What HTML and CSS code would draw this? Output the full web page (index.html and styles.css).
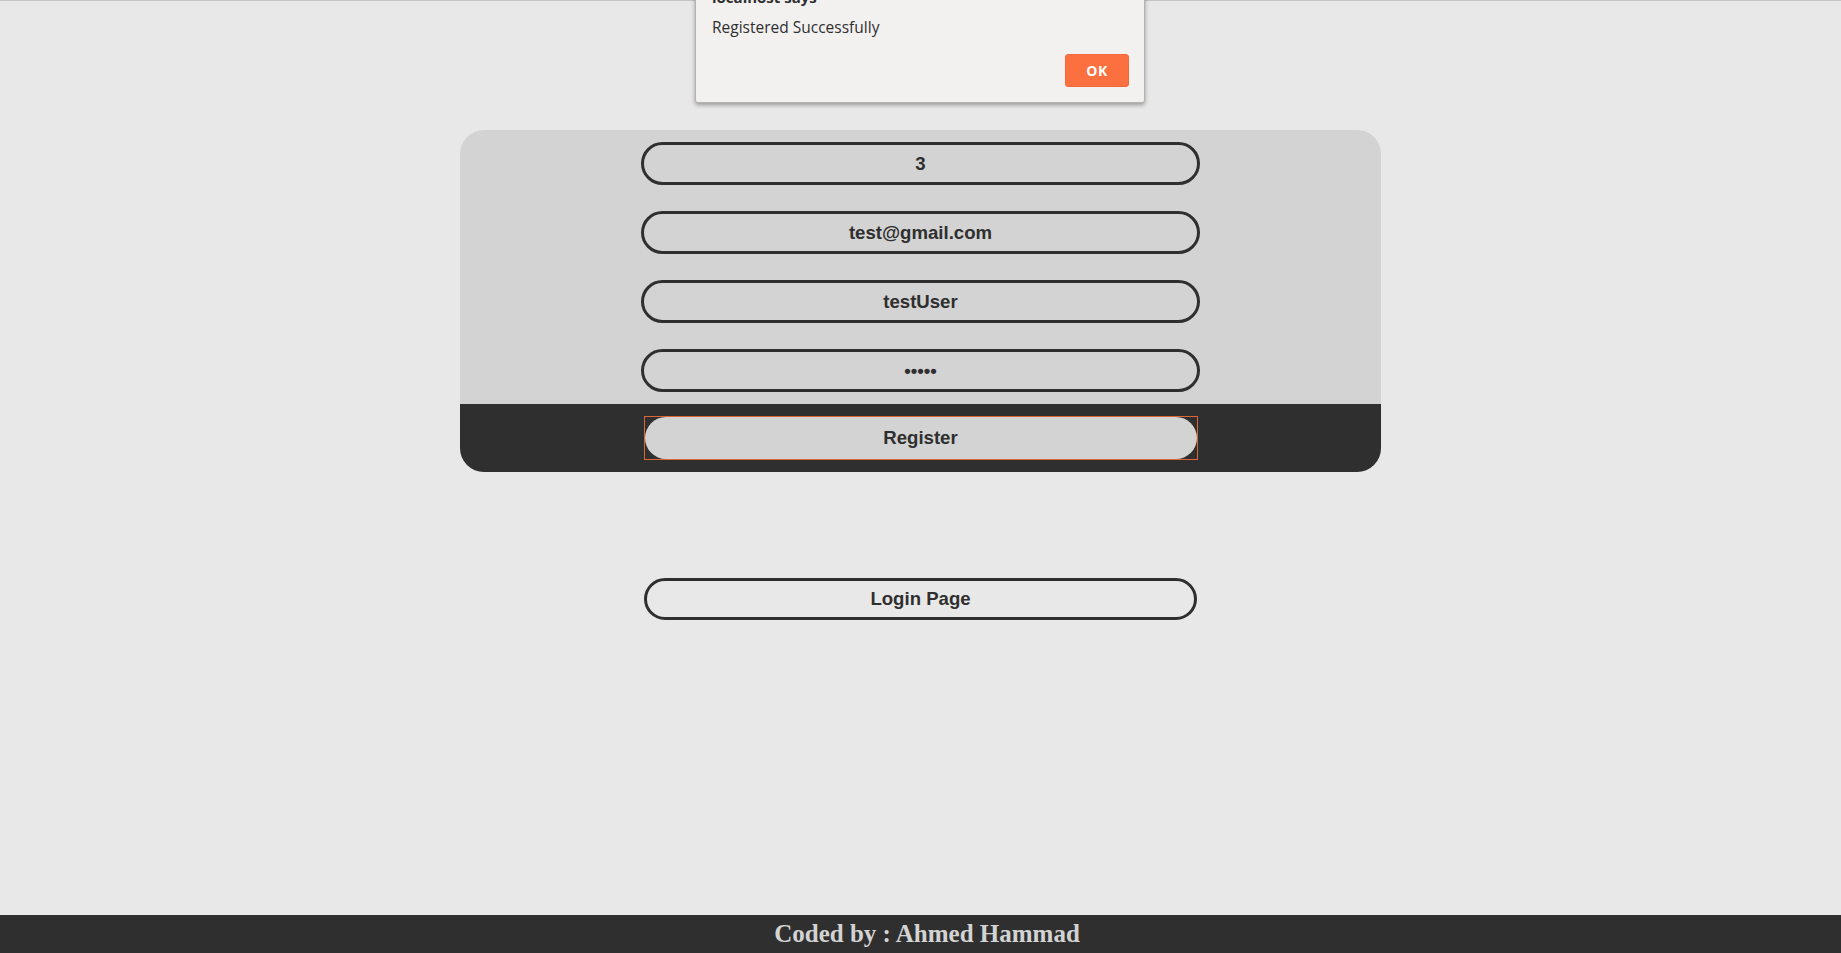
FILE: index.html
```html
<!DOCTYPE html>
<html>
<head>
<meta charset="utf-8">
<title>Register</title>
<link rel="stylesheet" href="styles.css">
</head>
<body>
<div class="page">
  <main class="main">
    <form class="card">
      <div class="fields">
        <input class="field" type="text" value="3">
        <input class="field" type="text" value="test@gmail.com">
        <input class="field" type="text" value="testUser">
        <input class="field" type="password" value="12345">
      </div>
      <div class="actions">
        <div class="focus-ring"><button type="button" class="btn-register">Register</button></div>
      </div>
    </form>
    <button type="button" class="btn-login">Login Page</button>
  </main>
  <footer class="footer">Coded by : Ahmed Hammad</footer>
</div>
<div class="dialog">
  <div class="dialog-title">localhost says</div>
  <div class="dialog-msg">Registered Successfully</div>
  <div class="dialog-actions"><button type="button" class="dialog-ok">OK</button></div>
</div>
</body>
</html>
```
FILE: styles.css
```css
* { box-sizing: border-box; }
html, body { margin: 0; padding: 0; height: 100%; }
body {
  background: #e8e8e8;
  border-top: 1px solid #c4c4c4;
  font-family: "Liberation Sans", Arial, sans-serif;
  overflow: hidden;
}
.page {
  height: 952px;
  display: flex;
  flex-direction: column;
}
.main {
  flex: 1;
  display: flex;
  flex-direction: column;
  align-items: center;
  padding-top: 129px;
}
.card {
  width: 921px;
  border-radius: 24px;
  overflow: hidden;
  background: #d3d3d3;
  display: flex;
  flex-direction: column;
}
.fields {
  display: flex;
  flex-direction: column;
  align-items: center;
  gap: 26px;
  padding: 12px 0 12px;
}
.field {
  width: 559px;
  height: 43px;
  border: 3px solid #2f2f2f;
  border-radius: 25px;
  background: #d3d3d3;
  text-align: center;
  font-family: "Liberation Sans", Arial, sans-serif;
  font-weight: bold;
  font-size: 18.6px;
  color: #2f2f2f;
  outline: none;
  padding: 0 10px;
}
.actions {
  background: #2f2f2f;
  display: flex;
  justify-content: center;
  padding: 12px 0;
}
.focus-ring {
  width: 554px;
  height: 44px;
  border: 1px solid #e0643a;
  display: flex;
}
.btn-register {
  flex: 1;
  border: none;
  border-radius: 22px;
  background: #d3d3d3;
  font-family: "Liberation Sans", Arial, sans-serif;
  font-weight: bold;
  font-size: 18.6px;
  color: #2f2f2f;
  padding: 0;
}
.btn-login {
  margin-top: 106px;
  width: 553px;
  height: 42px;
  border: 3px solid #2f2f2f;
  border-radius: 25px;
  background: transparent;
  font-family: "Liberation Sans", Arial, sans-serif;
  font-weight: bold;
  font-size: 18.6px;
  color: #2f2f2f;
}
.footer {
  height: 38px;
  background: #2f2f2f;
  color: #d3d3d3;
  font-family: "Liberation Serif", "Times New Roman", serif;
  font-weight: bold;
  font-size: 25px;
  display: flex;
  align-items: center;
  justify-content: center;
  padding-left: 13px;
}
.dialog {
  position: absolute;
  left: 695px;
  top: -26px;
  width: 450px;
  background: #f2f1f0;
  border: 1px solid #b5b3b1;
  border-radius: 0 0 3px 3px;
  box-shadow: 0 2px 4px rgba(0,0,0,0.35);
  font-family: "Open Sans", "Noto Sans", sans-serif;
  color: #2f2f2f;
  padding: 12px 15px 15px 16px;
}
.dialog-title {
  font-weight: bold;
  font-size: 15px;
  line-height: 20px;
}
.dialog-msg {
  font-size: 15.5px;
  line-height: 20px;
  margin-top: 10px;
}
.dialog-actions {
  display: flex;
  justify-content: flex-end;
  margin-top: 17px;
}
.dialog-ok {
  width: 64px;
  height: 33px;
  background: #fc6f3e;
  border: 1px solid #f26a3b;
  border-radius: 3px;
  color: #fff;
  font-family: "Open Sans", "Noto Sans", sans-serif;
  font-weight: bold;
  font-size: 14px;
  letter-spacing: 0.5px;
  padding: 0;
}
```
